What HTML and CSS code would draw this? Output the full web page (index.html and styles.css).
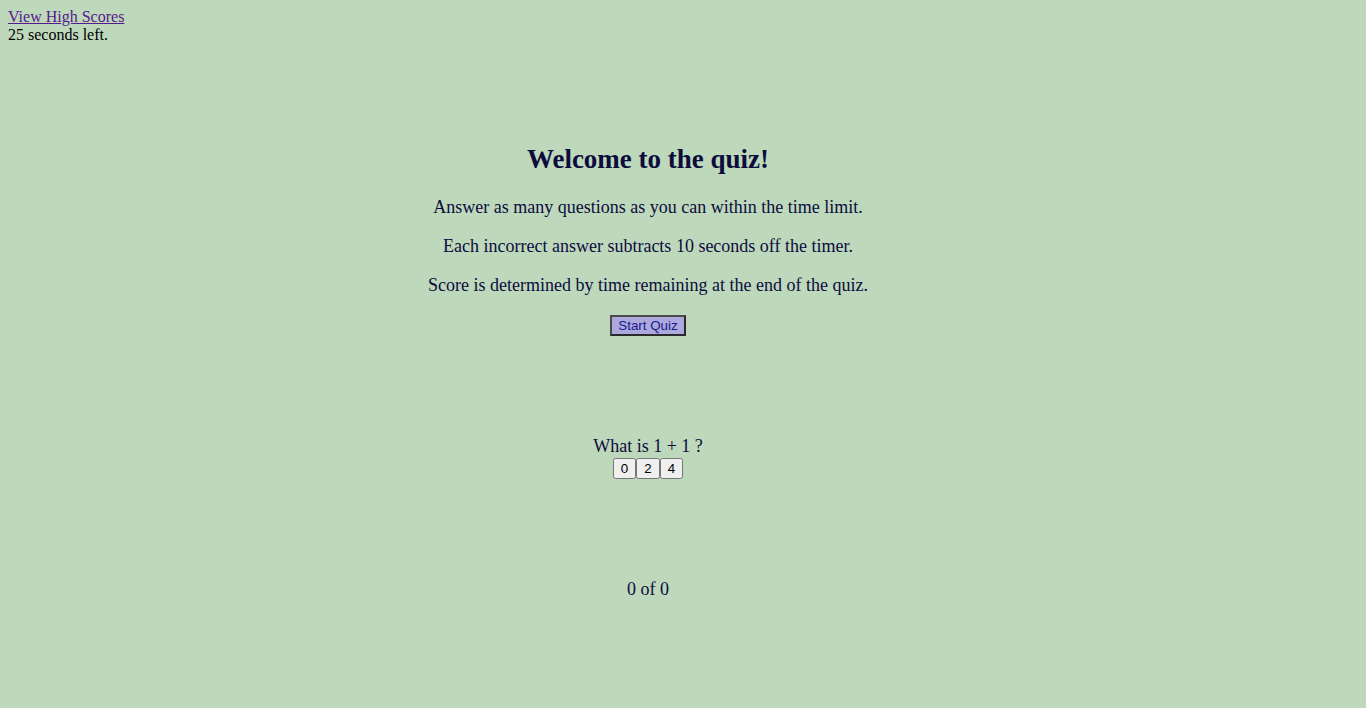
FILE: index.html
```html
<!DOCTYPE html>
<html lang="en">
<head>
<meta charset="utf-8">
<title>Quiz</title>
<link rel="stylesheet" href="styles.css">
</head>
<body>
<header class="top">
  <a class="scores-link" href="#">View High Scores</a>
  <div class="timer">25 seconds left.</div>
</header>
<main class="main">
  <section class="intro">
    <h2 class="title">Welcome to the quiz!</h2>
    <p class="rule">Answer as many questions as you can within the time limit.</p>
    <p class="rule">Each incorrect answer subtracts 10 seconds off the timer.</p>
    <p class="rule">Score is determined by time remaining at the end of the quiz.</p>
    <div class="start-row"><button class="start-btn" type="button">Start Quiz</button></div>
  </section>
  <section class="question">
    <div class="q-text">What is 1 + 1 ?</div>
    <div class="answers"><button class="ans" type="button">0</button><button class="ans" type="button">2</button><button class="ans" type="button">4</button></div>
  </section>
  <section class="progress">0 of 0</section>
</main>
</body>
</html>
```
FILE: styles.css
```css
html, body {
  background: #bed8bc;
}
body {
  margin: 8px;
  font-family: "Liberation Serif", "Times New Roman", serif;
  font-size: 16px;
  color: #000;
}
.top {
  line-height: 18px;
}
.scores-link {
  color: #551a8b;
  text-decoration: underline;
}
.timer {
  color: #000;
}
.main {
  width: 1280px;
  text-align: center;
  font-size: 18px;
  color: #0c0c3c;
  padding-top: 78px;
}
.title {
  font-size: 27px;
  font-weight: bold;
  margin: 22.4px 0 21.4px;
  line-height: 31px;
}
.rule {
  margin: 18px 0;
  line-height: 21px;
}
.start-row {
  height: 21px;
  line-height: 21px;
}
.start-btn {
  font-family: "Liberation Sans", Arial, sans-serif;
  font-size: 13.33px;
  color: #1a1a8a;
  background: #aba9de;
  border: 2px solid;
  border-color: #4a4a4a #2a2a2a #2a2a2a #4a4a4a;
  padding: 1px 6px;
  height: 21px;
  line-height: 15px;
  vertical-align: top;
  margin-top: 1px;
}
.question {
  margin-top: 101px;
  line-height: 21px;
}
.answers {
  display: flex;
  justify-content: center;
  margin-top: 1px;
}
.ans {
  font-family: "Liberation Sans", Arial, sans-serif;
  font-size: 13.33px;
  height: 21px;
  padding: 1px 6px;
  margin: 0;
}
.progress {
  margin-top: 100px;
  line-height: 21px;
}
```
